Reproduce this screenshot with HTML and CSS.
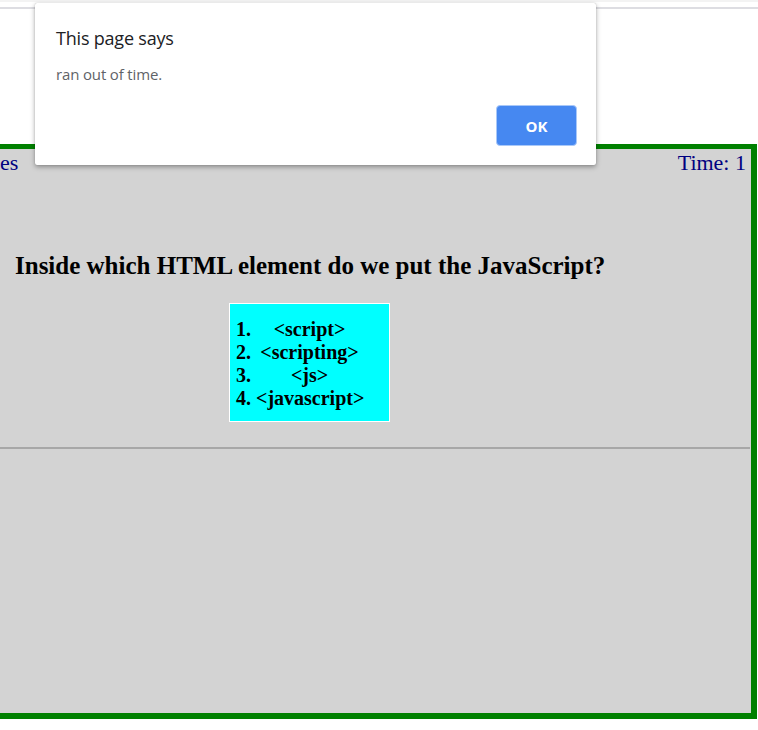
FILE: index.html
```html
<!DOCTYPE html>
<html>
<head>
<meta charset="utf-8">
<title>Quiz</title>
<link rel="stylesheet" href="styles.css">
</head>
<body>
<div class="topbar"></div>
<div class="quiz">
  <div class="status">
    <span class="score">es</span>
    <span class="time">Time: 1</span>
  </div>
  <h2 class="question">Inside which HTML element do we put the JavaScript?</h2>
  <div class="answers">
    <div class="row"><span class="num">1.</span><span class="opt">&lt;script&gt;</span></div>
    <div class="row"><span class="num">2.</span><span class="opt">&lt;scripting&gt;</span></div>
    <div class="row"><span class="num">3.</span><span class="opt">&lt;js&gt;</span></div>
    <div class="row"><span class="num">4.</span><span class="opt">&lt;javascript&gt;</span></div>
  </div>
  <div class="rule"></div>
</div>
<div class="dialog">
  <div class="dialog-title">This page says</div>
  <div class="dialog-msg">ran out of time.</div>
  <div class="dialog-actions"><button class="ok">OK</button></div>
</div>
</body>
</html>
```
FILE: styles.css
```css
html, body {
  margin: 0;
  padding: 0;
  background: #ffffff;
}
body {
  width: 758px;
  height: 730px;
  overflow: hidden;
  position: relative;
  font-family: "Liberation Serif", "Times New Roman", serif;
}
.topbar {
  height: 7px;
  border-bottom: 2px solid #dddde2;
  background: linear-gradient(#f3f3f3 0, #f3f3f3 2px, #ffffff 2px);
}
.quiz {
  margin-top: 135px;
  width: 751px;
  height: 564px;
  background: #d3d3d3;
  border-top: 5px solid #008000;
  border-right: 6px solid #008000;
  border-bottom: 6px solid #008000;
  display: flex;
  flex-direction: column;
}
.status {
  display: flex;
  justify-content: space-between;
  color: #000080;
  font-size: 22px;
  line-height: 24px;
  padding: 2px 5px 0 0;
}
.question {
  margin: 77px 0 0 15px;
  font-size: 25px;
  line-height: 28px;
  font-weight: bold;
  color: #000;
}
.answers {
  margin: 23px 0 0 229px;
  width: 147px;
  padding: 14px 6px 11px 6px;
  background: #00ffff;
  border: 1px solid #ffffff;
  font-weight: bold;
  font-size: 20px;
  line-height: 23px;
  color: #000;
}
.row {
  display: grid;
  grid-template-columns: 20px 1fr 20px;
}
.opt {
  text-align: center;
  white-space: nowrap;
}
.rule {
  margin-top: 25px;
  width: 750px;
  height: 0;
  border-top: 2px solid #a7a7a7;
}
.dialog {
  position: absolute;
  left: 35px;
  top: 3px;
  width: 561px;
  height: 162px;
  background: #ffffff;
  border-radius: 2px;
  box-shadow: 0 2px 5px rgba(0, 0, 0, 0.35), 0 0 1px rgba(0, 0, 0, 0.3);
  font-family: "Open Sans", "Noto Sans", sans-serif;
  display: flex;
  flex-direction: column;
}
.dialog-title {
  margin: 23px 0 0 21px;
  font-size: 18px;
  line-height: 24px;
  color: #202124;
  letter-spacing: -0.2px;
}
.dialog-msg {
  margin: 14px 0 0 21px;
  font-size: 15px;
  line-height: 20px;
  color: #5f6368;
  letter-spacing: -0.15px;
}
.dialog-actions {
  display: flex;
  justify-content: flex-end;
  padding: 0 19px 0 0;
  margin-top: 21px;
}
.ok {
  width: 81px;
  height: 41px;
  background: #4688f1;
  border: 1px solid #a9c8f8;
  border-radius: 4px;
  color: #ffffff;
  font-family: "Open Sans", "Noto Sans", sans-serif;
  font-weight: 700;
  font-size: 15px;
  padding: 0;
}
```
